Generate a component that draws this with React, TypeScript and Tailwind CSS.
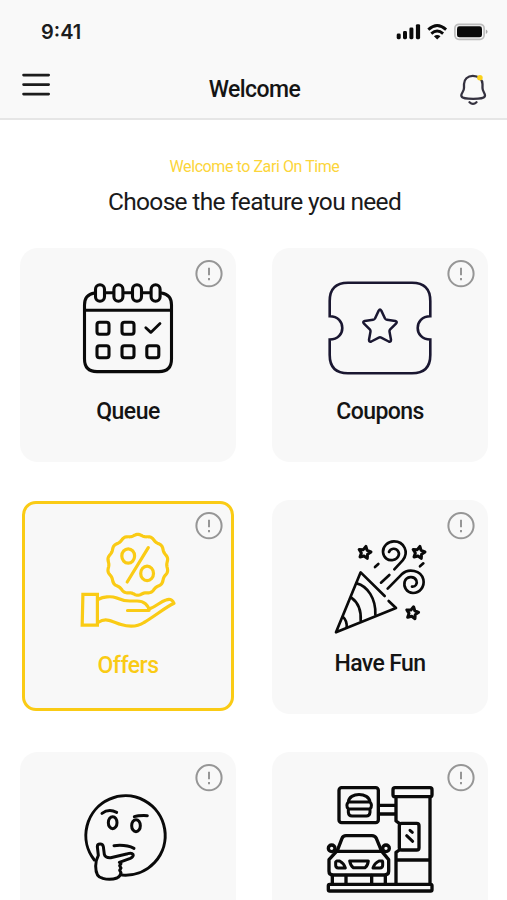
import type { ReactNode } from "react";

const STAR_ANGLES = Array.from({ length: 10 }, (_, i) => -Math.PI / 2 + (i * Math.PI) / 5);

function starPath(cx: number, cy: number, outer: number, inner: number, turn = 0) {
  return (
    STAR_ANGLES.map((a, i) => {
      const r = i % 2 === 0 ? outer : inner;
      return `${i === 0 ? "M" : "L"}${(cx + r * Math.cos(a + turn)).toFixed(2)} ${(cy + r * Math.sin(a + turn)).toFixed(2)}`;
    }).join(" ") + " Z"
  );
}

function sealPath(cx: number, cy: number, radius: number, depth: number, lobes: number) {
  const steps = 240;
  return (
    Array.from({ length: steps }, (_, i) => {
      const t = (i / steps) * Math.PI * 2;
      const r = radius + depth * Math.cos(lobes * (t + Math.PI / 2));
      return `${i === 0 ? "M" : "L"}${(cx + r * Math.cos(t)).toFixed(2)} ${(cy + r * Math.sin(t)).toFixed(2)}`;
    }).join(" ") + " Z"
  );
}

function Icon({ box, children, className }: { box: string; children: ReactNode; className: string }) {
  return (
    <svg
      viewBox={box}
      className={`block h-[120px] w-[120px] shrink-0 ${className}`}
      fill="none"
      stroke="currentColor"
      strokeLinecap="round"
      strokeLinejoin="round"
    >
      {children}
    </svg>
  );
}

function CalendarIcon() {
  const rings = [100, 118.4, 137, 155.6];
  return (
    <Icon box="68 272 120 120" className="text-[#0a0a0a]">
      <g strokeWidth="3.1">
        <path d="M94.5 293Q84.5 294.5 84.5 305V359Q84.5 371.6 97 371.6H159Q171.5 371.6 171.5 359V305Q171.5 294.5 161.5 293" />
        <path d="M85 310.3H171M105 292.8H113.5M123.5 292.8H132M142 292.8H150.5" />
        {rings.map((x) => (
          <rect key={x} x={x - 4.5} y="284.8" width="9" height="16.4" rx="4.5" />
        ))}
        <rect x="97" y="322.2" width="12" height="12" rx="2.5" />
        <rect x="122" y="322.2" width="12" height="12" rx="2.5" />
        <rect x="97" y="345.8" width="12" height="12" rx="2.5" />
        <rect x="122" y="345.8" width="12" height="12" rx="2.5" />
        <rect x="146.8" y="345.8" width="12" height="12" rx="2.5" />
        <path d="M145.8 327.8L150.8 332.4L160 323.6" strokeWidth="2.8" />
      </g>
    </Icon>
  );
}

function CouponIcon() {
  return (
    <Icon box="320 272 120 120" className="text-[#1a1731]">
      <path
        strokeWidth="2.6"
        strokeLinejoin="miter"
        d="M329.7 316.3V301Q329.7 282.7 348 282.7H412Q430.3 282.7 430.3 301V316.3C413.5 316.3 413.5 339.5 430.3 339.5V355Q430.3 373.3 412 373.3H348Q329.7 373.3 329.7 355V339.5C346.5 339.5 346.5 316.3 329.7 316.3Z"
      />
      <path
        strokeWidth="2.5"
        d="M378.7 310.6Q380 308.6 381.3 310.6L385 318.5Q385.6 319.6 387 319.8L395.3 321Q397.8 321.6 396 323.6L390.2 329.4Q389.3 330.4 389.5 331.6L391 339.8Q391 342.4 388.7 341.5L381.2 337.6Q380 337 378.8 337.6L371.3 341.5Q369 342.4 369 339.8L370.5 331.6Q370.7 330.4 369.8 329.4L364 323.6Q362.2 321.6 364.7 321L373 319.8Q374.4 319.6 375 318.5Z"
      />
    </Icon>
  );
}

function OffersIcon() {
  return (
    <Icon box="68 524 120 120" className="text-[#facb15]">
      <g strokeWidth="3.2">
        <path d={sealPath(137.8, 564.8, 29.7, 0.75, 14)} />
        <ellipse cx="128.2" cy="556" rx="6.4" ry="7.2" />
        <ellipse cx="147.1" cy="573.4" rx="6.4" ry="7.2" />
        <path d="M148.3 547.6L127.2 582" />
        <path strokeLinejoin="miter" d="M82.9 594.3H97.4V625.2H82.2Z" />
        <path d="M98.5 599.2C103 597 111 595.8 116 597.8C121 600 125 601 130 601H137C144 601 148.5 605 149 610.5H127.5" />
        <path d="M150 608.6C156 606.8 160 601.8 166 600C169.5 598.8 172 599 174 603.3C165 607.6 155 616 144 622.5C137 627 128 626.7 121 624.5C113 622 106 617 98.5 622.3" />
      </g>
    </Icon>
  );
}

function PartyIcon() {
  return (
    <Icon box="320 524 120 120" className="text-[#0a0a0a]">
      <g transform="translate(320 530) scale(.33333)" strokeWidth="8">
        <path d="M194 198L122 127L48 307L228 234L206 213" />
        <path d="M110 160C142 168 168 205 166 254M94 203C112 216 124 240 122 272M69 261C77 268 81 280 80 293" />
        <path d="M223 118L248 91C268 66 252 34 222 34C203 34 188 50 189 66C190 84 205 93 219 90C234 87 241 73 234 63C228 53 211 54 207 66" />
        <path d="M203 176L245 133C266 113 303 121 310 148C315 172 298 189 279 189C259 188 250 170 254 155C259 139 282 136 289 151C293 161 287 171 276 170" />
        <path d="M165 111L175 102M183 158L208 135M300 109L310 100" />
        <path strokeWidth="9" d={starPath(134, 68, 19, 10, 0.2)} />
        <path strokeWidth="9" d={starPath(296, 68, 19, 10, 0.2)} />
        <path strokeWidth="9" d={starPath(277, 249, 19, 10, 0.2)} />
      </g>
    </Icon>
  );
}

function ThinkingIcon() {
  return (
    <Icon box="68 776 120 120" className="text-[#0a0a0a]">
      <g transform="translate(10 741) scale(.33333)" strokeWidth="9">
        <path d="M253 357A119 119 0 1 1 336 402" />
        <path d="M276 217Q296 202 320 214M373 227Q385 223 412 224" />
        <ellipse cx="308" cy="245" rx="13" ry="18" />
        <ellipse cx="378" cy="254" rx="13" ry="18" />
        <path d="M312 314Q348 310 372 322" />
        <path d="M328 364L361 352C377 344 369 333 353 338L302 350Q286 351 283 340L280 317C278 306 262 307 262 317L265 343Q257 358 257 375C257 397 265 410 278 412C292 416 310 415 321 411C332 406 332 401 333 395L329 388L333 381L329 374L333 368" />
      </g>
    </Icon>
  );
}

function DriveThruIcon() {
  return (
    <Icon box="320 776 120 120" className="text-[#0a0a0a]">
      <g transform="translate(315 770) scale(.33333)" strokeWidth="10">
        <rect x="72" y="53" width="118" height="105" rx="8" />
        <path strokeWidth="9" d="M100 96C102 66 162 66 165 96M100 96H165Q174 106 165 117H100Q91 106 100 96M100 117V127Q101 138 111 138H154Q164 138 165 127V117" />
        <path d="M192 106H240M192 132H240" />
        <rect x="234" y="53" width="117" height="27" rx="6" />
        <path d="M243 82V153L253 160M345 82V340M253 240L243 247V340M246 270H343" />
        <rect x="253" y="160" width="59" height="80" rx="7" />
        <path strokeWidth="9" d="M285 181L292 187M275 197L293 214" />
        <rect x="40" y="343" width="311" height="20" rx="4" />
        <path d="M66 244L81 205Q84 197 93 197H171Q180 197 184 205L200 244M66 244H200" />
        <path d="M64 245L42 269V304Q42 315 54 315H208Q221 315 221 304V269L201 245" />
        <circle cx="50" cy="235" r="10" />
        <circle cx="213" cy="235" r="10" />
        <path strokeWidth="9" d="M65 273H74Q87 280 91 294H70Q62 294 62 286V276ZM104 273H160Q158 288 150 293H115Q107 288 104 273ZM202 273H192Q178 280 174 294H195Q203 294 203 286V276Z" />
        <path d="M52 316V340M93 316V340M170 316V340M211 316V340" />
      </g>
    </Icon>
  );
}

function InfoBadge({ className }: { className: string }) {
  return (
    <svg viewBox="0 0 28 28" className={`absolute h-7 w-7 text-[#969696] ${className}`} fill="none" stroke="currentColor">
      <circle cx="14" cy="13.7" r="12.6" strokeWidth="2" />
      <path d="M14 7.7V15.3M14 18.1V20.3" strokeWidth="2" />
    </svg>
  );
}

function FeatureCard({ label, icon, labelClass = "" }: { label?: string; icon: ReactNode; labelClass?: string }) {
  return (
    <div className="relative flex h-[214px] flex-col items-center rounded-[18px] bg-[#f8f8f8] pt-6">
      {icon}
      <InfoBadge className="right-[13px] top-[12px]" />
      {label && <span className={`mt-[6px] text-[23px] font-medium leading-7 text-[#141414] ${labelClass}`}>{label}</span>}
    </div>
  );
}

function SelectedCard({ label, icon }: { label: string; icon: ReactNode }) {
  return (
    <div className="relative mx-[2px] mt-px flex h-[210px] flex-col items-center rounded-[14px] border-[3px] border-[#facb15] bg-[#f8f8f8] pt-5">
      {icon}
      <InfoBadge className="right-[8px] top-[8px]" />
      <span className="mt-[8px] text-[23px] font-medium leading-7 tracking-[-0.5px] text-[#facb15]">{label}</span>
    </div>
  );
}

function StatusIcons() {
  return (
    <svg viewBox="394 20 96 24" className="h-6 w-24" fill="none">
      <g fill="#0a0a0a">
        <rect x="396.7" y="33.6" width="4" height="5.6" rx="1.4" />
        <rect x="403" y="31" width="4" height="8.2" rx="1.4" />
        <rect x="409.4" y="27.6" width="4" height="11.6" rx="1.4" />
        <rect x="415.9" y="24.2" width="4.2" height="15" rx="1.4" />
        <path d="M437.2 39.4L433.9 36.2Q437.2 33.8 440.5 36.2Z" />
        <rect x="457" y="26.3" width="25" height="11" rx="2.4" />
      </g>
      <path d="M428.3 29.6Q437.2 21.4 446.1 29.6M431.3 33.6Q437.2 28.4 443.1 33.6" stroke="#0a0a0a" strokeWidth="2.8" />
      <rect x="454.9" y="24.3" width="29.2" height="15" rx="4" stroke="#bdbdbd" strokeWidth="1.7" />
      <path d="M485.8 29.6Q487.6 30.4 487.6 31.8Q487.6 33.2 485.8 34Z" fill="#a8a8a8" />
    </svg>
  );
}

export default function App() {
  return (
    <div className="h-[900px] w-[507px] overflow-hidden bg-white font-['Roboto',sans-serif]">
      <header className="h-[120px] border-b-2 border-[#e6e6e6] bg-[#f9f9f9]">
        <div className="flex h-[62px] items-center justify-between pl-[41px] pr-[17px] pt-[2px]">
          <span className="font-['Inter',sans-serif] text-[20px] font-semibold leading-6 text-[#1c1c1c]">9:41</span>
          <StatusIcons />
        </div>
        <div className="grid h-[56px] grid-cols-[30px_1fr_30px] items-center pl-[21px] pr-[19px]">
          <svg viewBox="21 70 30 30" className="mb-[10px] h-[30px] w-[30px]" stroke="#1c1c1c" strokeWidth="2.6" strokeLinecap="round">
            <path d="M23.5 75.1H48.7M23.5 84.6H48.7M23.5 94.1H48.7" />
          </svg>
          <h1 className="text-center text-[23px] font-medium leading-7 tracking-[-0.55px] text-[#141414]">Welcome</h1>
          <svg viewBox="458 72 30 36" className="h-9 w-[30px]" fill="none" stroke="#34313f" strokeWidth="2.3" strokeLinecap="round">
            <path d="M472.8 75.8C467.5 75.8 464 79.6 464 84V88C464 91.5 461.3 92.8 461.3 95.6C461.3 98.6 467 98.8 473.2 98.8C479.5 98.8 485 98.6 485 95.6C485 92.8 482.5 91.5 482.5 88V84C482.5 79.6 478.5 75.8 472.8 75.8Z" />
            <path d="M469.5 102.2Q473 105.6 476.5 102.2" />
            <circle cx="479.9" cy="77.7" r="2.8" fill="#fbd21c" stroke="none" />
          </svg>
        </div>
      </header>

      <main className="px-5 pt-9">
        <p className="ml-[2px] text-center text-[16px] leading-[22px] tracking-[-0.42px] text-[#fcd53a]">Welcome to Zari On Time</p>
        <h2 className="mt-2 ml-[2px] text-center text-[24.5px] leading-8 tracking-[-0.67px] text-[#1a1a1a]">Choose the feature you need</h2>
        <div className="mt-[30px] grid grid-cols-[216px_216px] gap-x-9 gap-y-[38px]">
          <FeatureCard label="Queue" icon={<CalendarIcon />} labelClass="tracking-[-0.55px]" />
          <FeatureCard label="Coupons" icon={<CouponIcon />} labelClass="tracking-[-0.6px]" />
          <SelectedCard label="Offers" icon={<OffersIcon />} />
          <FeatureCard label="Have Fun" icon={<PartyIcon />} labelClass="tracking-[-0.6px]" />
          <FeatureCard icon={<ThinkingIcon />} />
          <FeatureCard icon={<DriveThruIcon />} />
        </div>
      </main>
    </div>
  );
}
